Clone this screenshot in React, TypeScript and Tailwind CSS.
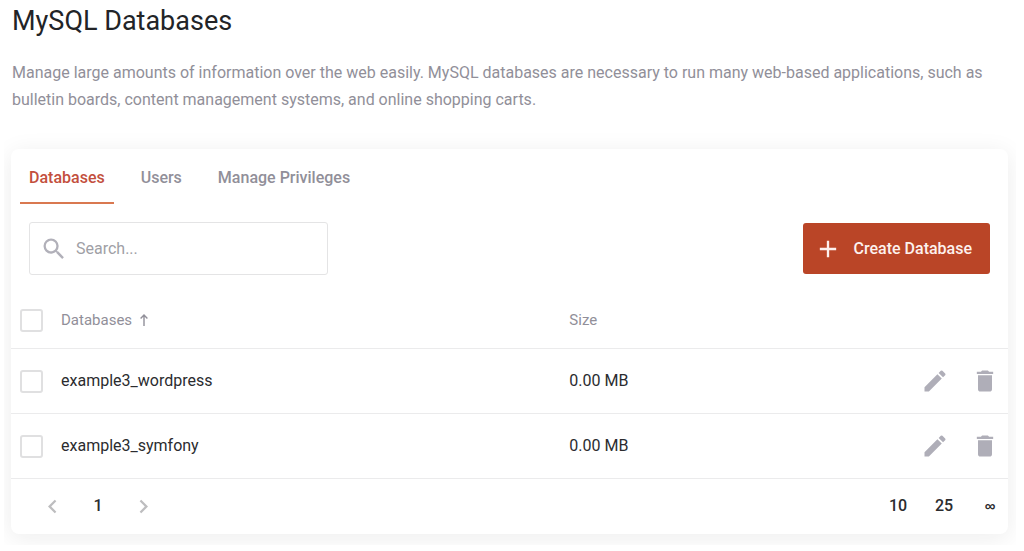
import { useState } from "react";
import {
	MdAdd,
	MdChevronLeft,
	MdChevronRight,
	MdDelete,
	MdEdit,
	MdSearch,
} from "react-icons/md";

const TABS = ["Databases", "Users", "Manage Privileges"];
const PAGE_SIZES = ["10", "25", "∞"];

const DATABASES = [
	{ name: "example3_wordpress", size: "0.00 MB" },
	{ name: "example3_symfony", size: "0.00 MB" },
];

function Checkbox({ label }: { label: string }) {
	return (
		<input
			aria-label={label}
			className="block size-[23px] appearance-none rounded-[3px] border-2 border-[#e0e0e1] bg-white checked:border-[#ba4527] checked:bg-[#ba4527]"
			type="checkbox"
		/>
	);
}

function SortArrow() {
	return (
		<svg
			aria-hidden="true"
			className="h-3 w-2"
			fill="none"
			stroke="currentColor"
			strokeWidth="1.4"
			viewBox="0 0 8 12"
		>
			<path d="M4 12V1M0.6 4.4L4 1l3.4 3.4" />
		</svg>
	);
}

export default function App() {
	const [tab, setTab] = useState("Databases");
	const [search, setSearch] = useState("");

	const rows = DATABASES.filter((db) => db.name.includes(search.trim()));

	return (
		<div className="bg-white font-['Roboto',sans-serif] text-[#2b2c2f] text-base">
			<header className="px-3 pt-1">
				<h1 className="text-[27px] text-[#222427] leading-[34px]">
					MySQL Databases
				</h1>
				<p className="mt-[21px] text-[#918f99] leading-[27px]">
					Manage large amounts of information over the web easily. MySQL
					databases are necessary to run many web-based applications, such as
					bulletin boards, content management systems, and online shopping carts.
				</p>
			</header>

			<main className="mr-2 ml-1 overflow-hidden pt-9 pr-2 pb-[11px] pl-[7px]">
				<section className="rounded-lg bg-white shadow-[0_4px_24px_rgba(20,30,30,0.08)]">
					<div className="flex gap-[18px] px-[9px]" role="tablist">
						{TABS.map((name) => (
							<button
								aria-selected={tab === name}
								className={`h-[55px] border-b-2 px-[9px] pt-1 font-medium ${
									tab === name
										? "border-[#d97850] text-[#c34f3d]"
										: "border-transparent text-[#918f99]"
								}`}
								key={name}
								onClick={() => setTab(name)}
								role="tab"
								type="button"
							>
								{name}
							</button>
						))}
					</div>

					<div className="flex items-center justify-between px-[18px] pt-[18px]">
						<label className="flex h-[53px] w-[299px] items-center gap-2 rounded-[3px] border border-[#e4e4e5] pl-2.5">
							<MdSearch className="size-7 shrink-0 text-[#b1b0b9]" />
							<input
								aria-label="Search"
								className="w-full min-w-0 bg-transparent outline-none placeholder:text-[#a09fa6]"
								onChange={(e) => setSearch(e.target.value)}
								placeholder="Search..."
								type="text"
								value={search}
							/>
						</label>
						<button
							className="flex h-[51px] items-center gap-3 rounded-[3px] bg-[#ba4527] pr-[18px] pl-[11px] font-medium text-[#fdf1ee]"
							type="button"
						>
							<MdAdd className="size-7" />
							Create Database
						</button>
					</div>

					<table className="mt-[17px] w-full table-fixed text-left">
						<thead>
							<tr className="h-14 border-[#ebebec] border-b text-[#918f99] text-[15px]">
								<th className="w-[50px] pt-px pl-[9px]">
									<Checkbox label="Select all databases" />
								</th>
								<th aria-sort="ascending" className="font-normal">
									<button className="flex items-center gap-2" type="button">
										Databases
										<SortArrow />
									</button>
								</th>
								<th className="w-[30%] font-normal">Size</th>
								<th aria-label="Actions" className="w-[14%]" />
							</tr>
						</thead>
						<tbody>
							{rows.map((db) => (
								<tr className="h-[65px] border-[#ebebec] border-b" key={db.name}>
									<td className="pt-px pl-[9px]">
										<Checkbox label={`Select ${db.name}`} />
									</td>
									<td className="pt-px">{db.name}</td>
									<td className="pt-px">{db.size}</td>
									<td>
										<div className="flex justify-end gap-[22px] pr-[9px] text-[#afaeb8]">
											<button aria-label={`Edit ${db.name}`} type="button">
												<MdEdit className="size-7" />
											</button>
											<button aria-label={`Delete ${db.name}`} type="button">
												<MdDelete className="size-7" />
											</button>
										</div>
									</td>
								</tr>
							))}
						</tbody>
					</table>

					<footer className="flex h-[55px] items-center justify-between pr-2 pl-7 font-medium">
						<nav aria-label="Pagination" className="flex items-center gap-[26px]">
							<button
								aria-label="Previous page"
								className="text-[#bdbdbf]"
								type="button"
							>
								<MdChevronLeft className="size-[27px]" />
							</button>
							<button aria-current="page" className="w-3" type="button">
								1
							</button>
							<button
								aria-label="Next page"
								className="text-[#bdbdbf]"
								type="button"
							>
								<MdChevronRight className="size-[27px]" />
							</button>
						</nav>
						<div className="flex items-center gap-[26px]">
							{PAGE_SIZES.map((size) => (
								<button
									aria-label={`Show ${size} per page`}
									className={`w-5 ${
										size === "∞"
											? "font-['Liberation_Sans',sans-serif] font-bold text-[15px]"
											: ""
									}`}
									key={size}
									type="button"
								>
									{size}
								</button>
							))}
						</div>
					</footer>
				</section>
			</main>
		</div>
	);
}
